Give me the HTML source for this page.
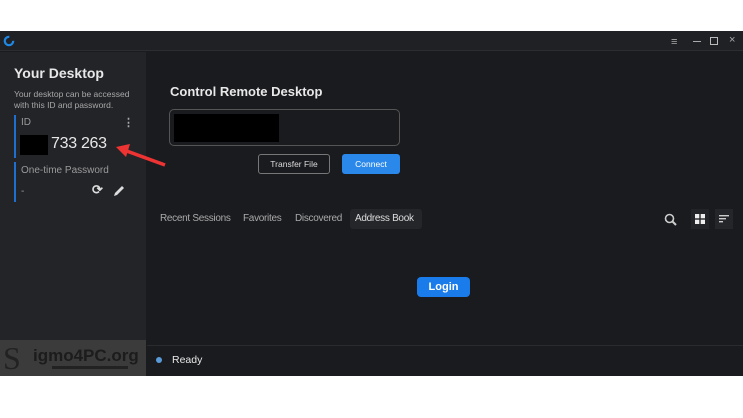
<!DOCTYPE html>
<html><head><meta charset="utf-8"><style>
*{margin:0;padding:0;box-sizing:border-box}
body{width:743px;height:418px;background:#fff;position:relative;overflow:hidden;font-family:"Liberation Sans",sans-serif;}
.a{position:absolute}
#win{left:0;top:31px;width:743px;height:345px;background:#1a1b1f}
#tb{left:0;top:31px;width:743px;height:20px;background:#202125;border-bottom:1px solid #2c2d31}
#lp{left:0;top:52px;width:146px;height:324px;background:#232428}
#sb{left:147px;top:345px;width:596px;height:31px;background:#1a1b1f;border-top:1px solid #2a2b2f}
.t{color:#e8e8e8}
.tab{font-size:10px;color:#aaa;letter-spacing:-0.3px}
</style></head><body>
<div id="win" class="a"></div>
<div id="tb" class="a"></div>
<svg class="a" style="left:3px;top:35px" width="12" height="12"><circle cx="6" cy="6" r="4.2" fill="none" stroke="#1e88e5" stroke-width="2.2" stroke-dasharray="20 6"/></svg>
<div class="a" style="left:671px;top:36px;color:#aaa;font-size:11px">≡</div>
<div class="a" style="left:693px;top:41px;width:8px;height:1px;background:#aaa"></div>
<div class="a" style="left:710px;top:37px;width:8px;height:8px;border:1.5px solid #bbb"></div>
<div class="a" style="left:729px;top:34px;color:#aaa;font-size:11px">×</div>
<div id="lp" class="a"></div>
<div class="a t" style="left:14px;top:65px;font-size:14px;font-weight:bold">Your Desktop</div>
<div class="a" style="left:14px;top:89px;font-size:8.5px;color:#a8a8a8;line-height:11px">Your desktop can be accessed<br>with this ID and password.</div>
<div class="a" style="left:14px;top:115px;width:2px;height:43px;background:#1e6fd0"></div>
<div class="a" style="left:21px;top:117px;font-size:10px;color:#9a9a9a">ID</div>
<div class="a" style="left:123px;top:116px;color:#aaa;font-size:11px;font-weight:bold">⋮</div>
<div class="a" style="left:20px;top:135px;width:28px;height:20px;background:#000"></div>
<div class="a t" style="left:51px;top:135px;font-size:16px;letter-spacing:-0.3px">733 263</div>
<div class="a" style="left:14px;top:162px;width:2px;height:40px;background:#1e6fd0"></div>
<div class="a" style="left:21px;top:165px;font-size:10px;color:#9a9a9a">One-time Password</div>
<div class="a" style="left:21px;top:186px;font-size:10px;color:#9a9a9a">-</div>
<div class="a" style="left:92px;top:182px;color:#ddd;font-size:13px;font-weight:bold">⟳</div>
<svg class="a" style="left:112px;top:184px" width="14" height="14"><path d="M2 12 L3 9 L10 2 L12 4 L5 11 Z" fill="#ddd"/></svg>
<svg class="a" style="left:110px;top:135px" width="60" height="40"><line x1="55" y1="30" x2="14" y2="15" stroke="#e33" stroke-width="3.5"/><path d="M6 12 L20 9 L16 22 Z" fill="#e33"/></svg>
<div class="a" style="left:0;top:340px;width:146px;height:36px;background:#3b3b3b"></div>
<div class="a" style="left:3px;top:340px;font-size:32px;color:#222;font-family:'Liberation Serif',serif">S</div>
<div class="a" style="left:33px;top:346px;font-size:17px;font-weight:bold;color:#1c1c1c">igmo4PC.org</div>
<div class="a" style="left:52px;top:366px;width:76px;height:3px;background:#222"></div>
<div class="a t" style="left:170px;top:84px;font-size:13px;font-weight:bold">Control Remote Desktop</div>
<div class="a" style="left:169px;top:109px;width:231px;height:37px;border:1px solid #555;border-radius:5px"></div>
<div class="a" style="left:174px;top:114px;width:105px;height:28px;background:#000"></div>
<div class="a" style="left:258px;top:154px;width:72px;height:20px;border:1px solid #777;border-radius:3px;color:#ddd;font-size:8.5px;text-align:center;line-height:18px">Transfer File</div>
<div class="a" style="left:342px;top:154px;width:58px;height:20px;background:#2a88ea;border-radius:3px;color:#fff;font-size:8.5px;text-align:center;line-height:20px">Connect</div>
<div class="a tab" style="left:160px;top:213px">Recent Sessions</div>
<div class="a tab" style="left:243px;top:213px">Favorites</div>
<div class="a tab" style="left:295px;top:213px">Discovered</div>
<div class="a" style="left:350px;top:209px;width:72px;height:20px;background:#25262a;border-radius:3px"></div>
<div class="a tab" style="left:355px;top:213px;color:#ddd">Address Book</div>
<svg class="a" style="left:664px;top:213px" width="14" height="14"><circle cx="5.5" cy="5.5" r="4" fill="none" stroke="#ccc" stroke-width="1.6"/><line x1="8.5" y1="8.5" x2="12" y2="12" stroke="#ccc" stroke-width="2"/></svg>
<div class="a" style="left:691px;top:209px;width:18px;height:20px;background:#222327"></div>
<svg class="a" style="left:695px;top:214px" width="10" height="10"><rect x="0" y="0" width="4.3" height="4.3" fill="#eee"/><rect x="5.7" y="0" width="4.3" height="4.3" fill="#eee"/><rect x="0" y="5.7" width="4.3" height="4.3" fill="#eee"/><rect x="5.7" y="5.7" width="4.3" height="4.3" fill="#eee"/></svg>
<div class="a" style="left:715px;top:209px;width:18px;height:20px;background:#25262a"></div>
<svg class="a" style="left:719px;top:215px" width="10" height="8"><rect x="0" y="0" width="10" height="1.4" fill="#ccc"/><rect x="0" y="3" width="7" height="1.4" fill="#ccc"/><rect x="0" y="6" width="4" height="1.4" fill="#ccc"/></svg>
<div class="a" style="left:417px;top:277px;width:53px;height:20px;background:#1a7bea;border-radius:4px;color:#fff;font-size:11px;font-weight:bold;text-align:center;line-height:20px">Login</div>
<div id="sb" class="a"></div>
<div class="a" style="left:156px;top:357px;width:6px;height:6px;border-radius:50%;background:#5a9ad8"></div>
<div class="a t" style="left:172px;top:354px;font-size:10.5px">Ready</div>
</body></html>
